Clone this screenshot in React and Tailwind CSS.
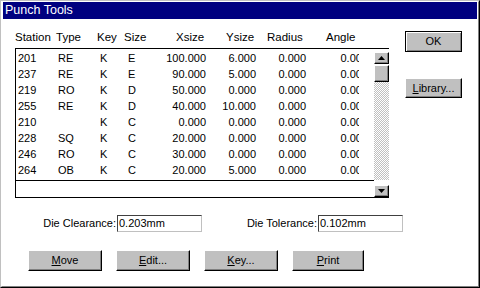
const rows = [
  ["201", "RE", "K", "E", "100.000", "6.000", "0.000", "0.000"],
  ["237", "RE", "K", "E", "90.000", "5.000", "0.000", "0.000"],
  ["219", "RO", "K", "D", "50.000", "0.000", "0.000", "0.000"],
  ["255", "RE", "K", "D", "40.000", "10.000", "0.000", "0.000"],
  ["210", "", "K", "C", "0.000", "0.000", "0.000", "0.000"],
  ["228", "SQ", "K", "C", "20.000", "0.000", "0.000", "0.000"],
  ["246", "RO", "K", "C", "30.000", "0.000", "0.000", "0.000"],
  ["264", "OB", "K", "C", "20.000", "5.000", "0.000", "0.000"],
];

const btn =
  "bg-[#c0c0c0] border-t border-l border-t-white border-l-white border-r border-b border-r-black border-b-black shadow-[inset_-1px_-1px_0_#808080] flex items-center justify-center";

function Arrow({ down }) {
  return (
    <svg width="7" height="4" viewBox="0 0 7 4">
      {down ? (
        <polygon points="0,0 7,0 3.5,4" fill="#000" />
      ) : (
        <polygon points="0,4 7,4 3.5,0" fill="#000" />
      )}
    </svg>
  );
}

export default function App() {
  return (
    <div className="w-[480px] h-[288px] bg-white border-t border-l border-t-[#c0c0c0] border-l-[#c0c0c0] border-r border-b border-r-black border-b-black font-['Liberation_Sans',Arial,sans-serif] text-black text-[11px] overflow-hidden">
      <div className="h-full border-t border-l border-t-white border-l-white border-r border-b border-r-[#808080] border-b-[#808080] px-[1px] flex flex-col">
        <div className="h-[17px] shrink-0 bg-[#000080] text-white text-[12.5px] leading-[17px] pl-[2px]">
          Punch Tools
        </div>

        <div className="flex items-start">
          <div className="ml-[12px] w-[374px] flex flex-col">
            <div className="mt-[11px] h-[14px] flex leading-[14px] whitespace-nowrap text-[11.5px]">
              <div className="w-[41px]">Station</div>
              <div className="w-[41px]">Type</div>
              <div className="w-[27px]">Key</div>
              <div className="w-[52px]">Size</div>
              <div className="w-[50px]">Xsize</div>
              <div className="w-[41px]">Ysize</div>
              <div className="w-[59px]">Radius</div>
              <div>Angle</div>
            </div>

            <div className="mt-[4px] h-[150px] border-t border-l border-b border-black flex">
              <div className="w-[358px] flex flex-col">
                <div className="h-[132px] border-b border-black">
                  <div className="w-[343px] h-full overflow-hidden pt-[1px]">
                    {rows.map((r) => (
                      <div key={r[0]} className="h-[16px] leading-[16px] flex pl-[2px] whitespace-nowrap">
                        <div className="w-[40px] shrink-0">{r[0]}</div>
                        <div className="w-[42px] shrink-0">{r[1]}</div>
                        <div className="w-[28px] shrink-0">{r[2]}</div>
                        <div className="w-[30px] shrink-0">{r[3]}</div>
                        <div className="w-[48px] shrink-0 text-right">{r[4]}</div>
                        <div className="w-[50px] shrink-0 text-right">{r[5]}</div>
                        <div className="w-[50px] shrink-0 text-right">{r[6]}</div>
                        <div className="w-[62px] shrink-0 text-right">{r[7]}</div>
                      </div>
                    ))}
                  </div>
                </div>
                <div className="flex-1" />
              </div>

              <div className="w-[15px] flex flex-col">
                <div className={`mt-[3px] h-[12px] ${btn}`}>
                  <Arrow />
                </div>
                <div className={`mt-[1px] h-[17px] ${btn}`} />
                <div className="h-[98px] bg-[repeating-conic-gradient(#c0c0c0_0%_25%,#ffffff_0%_50%)] bg-[length:2px_2px]" />
                <div className={`mt-[5px] h-[12px] ${btn}`}>
                  <Arrow down />
                </div>
              </div>
            </div>
          </div>

          <div className="ml-[16px] flex flex-col">
            <div className="mt-[12px] w-[57px] h-[21px] bg-[#c0c0c0] border border-black shadow-[inset_1px_1px_0_#ffffff,inset_-1px_-1px_0_#808080] flex items-center justify-center">
              OK
            </div>
            <div className={`mt-[26px] w-[57px] h-[20px] ${btn}`}>
              <span>
                <span className="underline underline-offset-[1px]">L</span>ibrary...
              </span>
            </div>
          </div>
        </div>

        <div className="mt-[17px] h-[17px] flex leading-[17px] whitespace-nowrap">
          <div className="w-[114px] text-right pr-[1px]">Die Clearance:</div>
          <div className="w-[85px] h-[17px] border border-t-[#404040] border-l-[#404040] border-r-[#c0c0c0] border-b-[#c0c0c0] pl-[1px] leading-[15px]">
            0.203mm
          </div>
          <div className="w-[116px] text-right pr-[1px]">Die Tolerance:</div>
          <div className="w-[85px] h-[17px] border border-t-[#404040] border-l-[#404040] border-r-[#c0c0c0] border-b-[#c0c0c0] pl-[1px] leading-[15px]">
            0.102mm
          </div>
        </div>

        <div className="mt-[18px] flex gap-[14px] pl-[25px]">
          <div className={`w-[74px] h-[21px] ${btn}`}>
            <span>
              <span className="underline underline-offset-[1px]">M</span>ove
            </span>
          </div>
          <div className={`w-[74px] h-[21px] ${btn}`}>
            <span>
              <span className="underline underline-offset-[1px]">E</span>dit...
            </span>
          </div>
          <div className={`w-[74px] h-[21px] ${btn}`}>
            <span>
              <span className="underline underline-offset-[1px]">K</span>ey...
            </span>
          </div>
          <div className={`w-[72px] h-[21px] ${btn}`}>
            <span>
              <span className="underline underline-offset-[1px]">P</span>rint
            </span>
          </div>
        </div>
      </div>
    </div>
  );
}
